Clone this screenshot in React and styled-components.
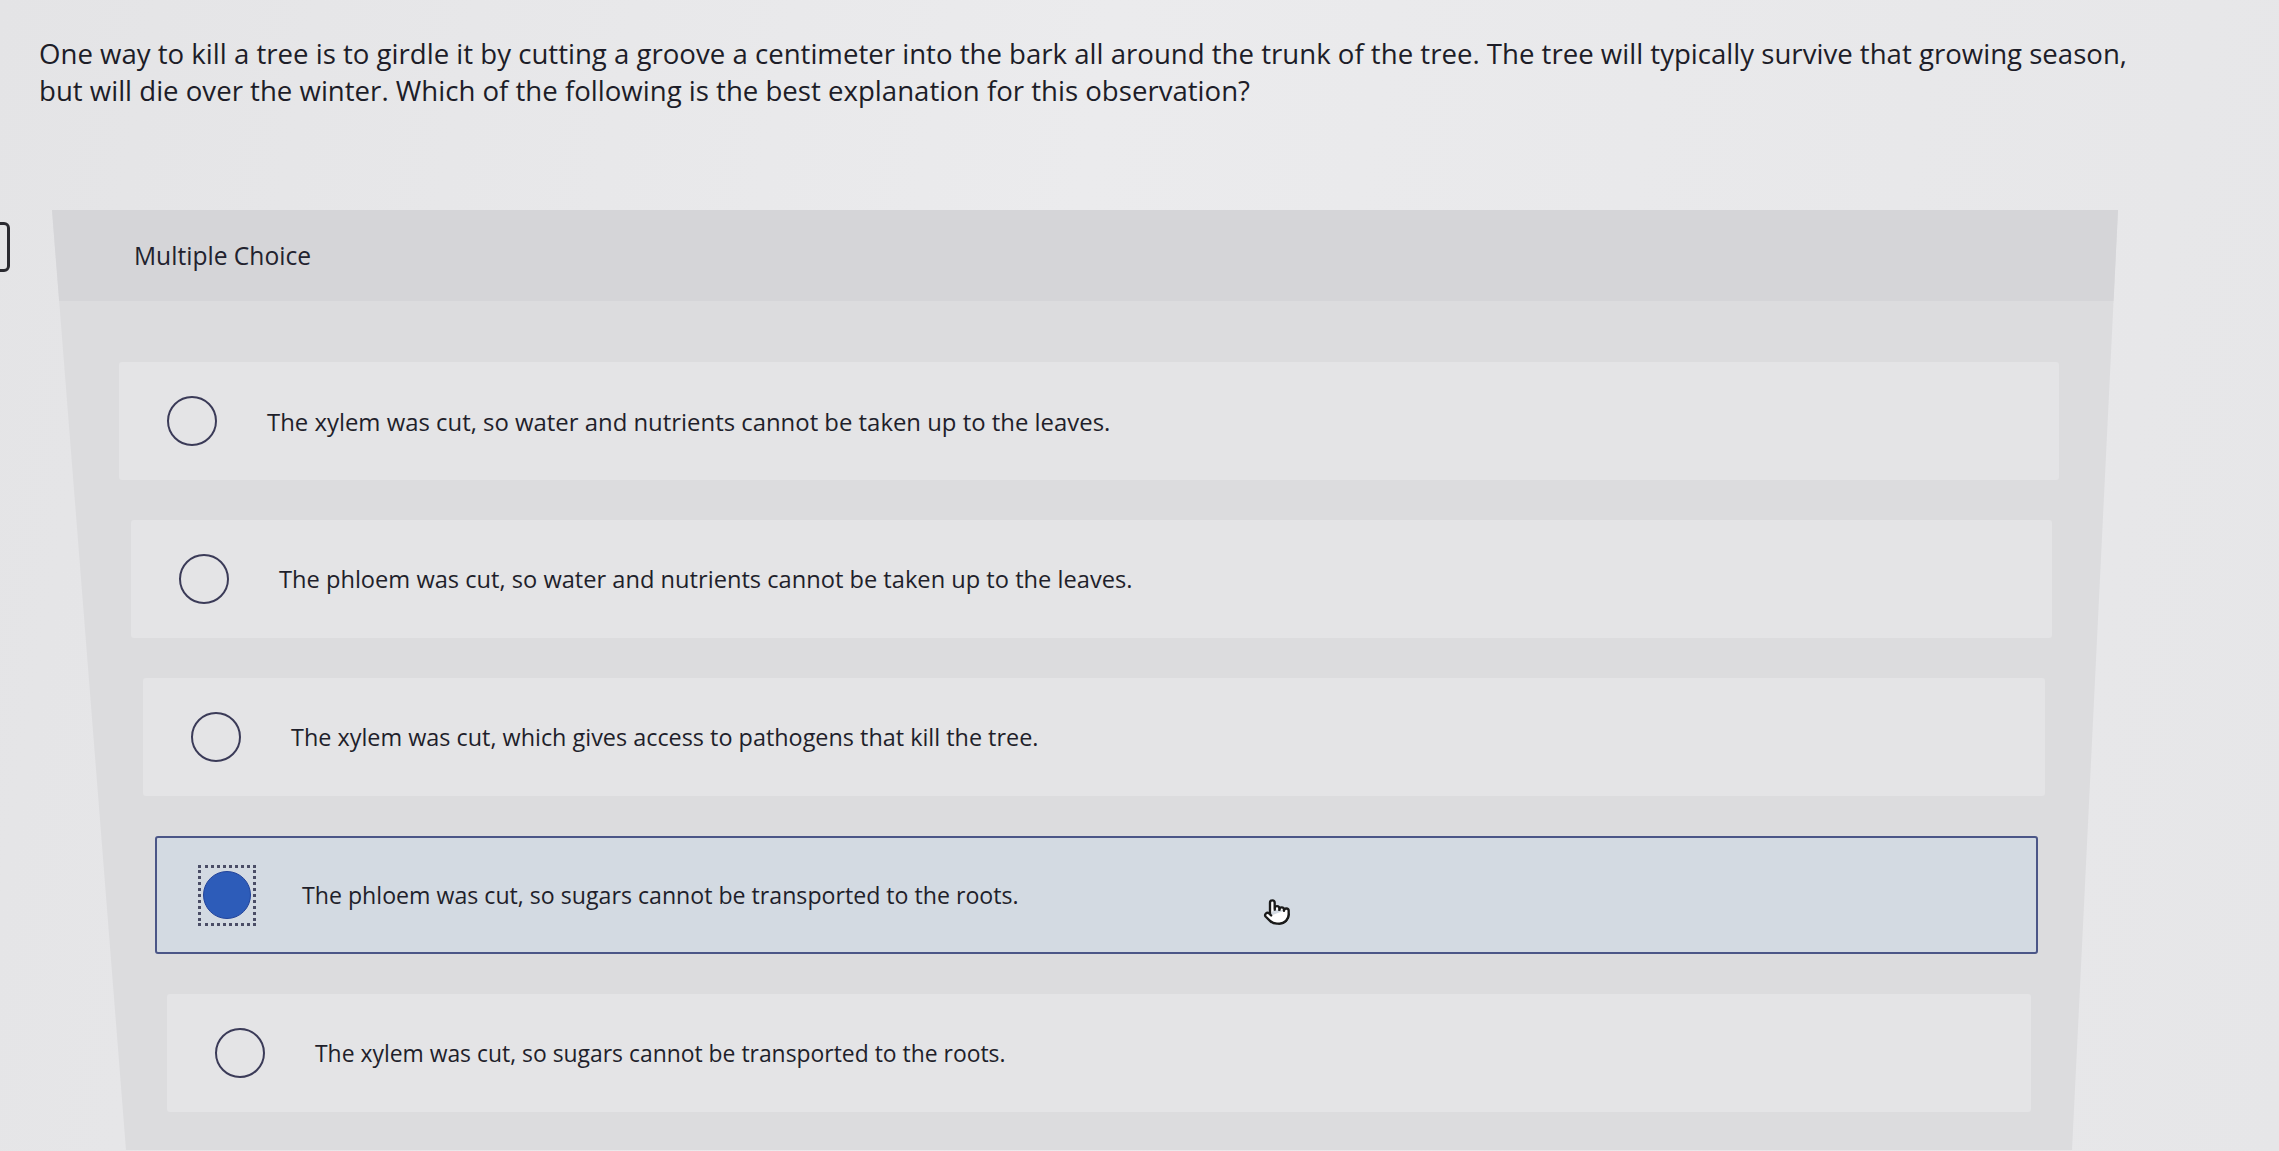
import React from "react";
import styled, { createGlobalStyle } from "styled-components";
import { Pointer } from "lucide-react";

const GlobalStyle = createGlobalStyle`
  html, body {
    margin: 0;
    padding: 0;
    background: #e7e7e9;
  }
  body {
    font-family: "Open Sans", "Lato", sans-serif;
    color: #1f1f2b;
    overflow: hidden;
  }
`;

const Page = styled.div`
  position: relative;
  width: 2279px;
  height: 1151px;
  padding: 35px 0 0 39px;
  box-sizing: border-box;
  background: linear-gradient(100deg, #e4e4e6 0%, #ebebed 45%, #e6e6e8 100%);
`;

const EdgeTab = styled.div`
  position: absolute;
  left: -14px;
  top: 222px;
  width: 18px;
  height: 44px;
  border: 3px solid #2a2a30;
  border-radius: 6px;
`;

const Question = styled.p`
  margin: 0;
  width: 2200px;
  font-size: 27.6px;
  line-height: 37px;
  color: #1d1d28;
`;

const Panel = styled.section`
  margin: 101px 161px 0 13px;
  height: 940px;
  background: #dcdcde;
  clip-path: polygon(0 0, 100% 0, calc(100% - 46px) 100%, 74px 100%);
`;

const PanelHeader = styled.div`
  height: 91px;
  display: flex;
  align-items: center;
  padding-left: 82px;
  background: #d5d5d8;
  font-size: 24.6px;
  color: #22222e;
`;

const ChoiceList = styled.div`
  display: flex;
  flex-direction: column;
  gap: 40px;
  padding-top: 61px;
`;

const ChoiceRow = styled.div`
  position: relative;
  height: 118px;
  margin-left: ${(p) => 67 + p.$index * 12}px;
  margin-right: ${(p) => 59 + p.$index * 7}px;
  display: flex;
  align-items: center;
  box-sizing: border-box;
  padding-left: ${(p) => (p.$selected ? 41 : 44)}px;
  background: ${(p) => (p.$selected ? "#d3dae2" : "#e4e4e6")};
  border: ${(p) => (p.$selected ? "2px solid #4b5687" : "none")};
  border-radius: 3px;
`;

const RadioWrap = styled.div`
  width: 58px;
  height: 61px;
  display: flex;
  align-items: center;
  justify-content: center;
  box-sizing: border-box;
  border: 3px dotted ${(p) => (p.$focused ? "#4a4d66" : "transparent")};
  flex-shrink: 0;
`;

const Radio = styled.span`
  display: block;
  width: ${(p) => (p.$checked ? 48 : 50)}px;
  height: ${(p) => (p.$checked ? 48 : 50)}px;
  border-radius: 50%;
  box-sizing: border-box;
  border: ${(p) => (p.$checked ? "1px solid #23449a" : "2.5px solid #3b3b58")};
  background: ${(p) => (p.$checked ? "#2d5cb9" : "transparent")};
`;

const ChoiceText = styled.span`
  margin-left: 46px;
  font-size: ${(p) => 23.9 - p.$index * 0.25}px;
  color: #1f1f2b;
`;

const Cursor = styled.div`
  position: absolute;
  left: 1106px;
  top: 60px;
  color: #1a1a1a;
  display: flex;
`;

const choices = [
  "The xylem was cut, so water and nutrients cannot be taken up to the leaves.",
  "The phloem was cut, so water and nutrients cannot be taken up to the leaves.",
  "The xylem was cut, which gives access to pathogens that kill the tree.",
  "The phloem was cut, so sugars cannot be transported to the roots.",
  "The xylem was cut, so sugars cannot be transported to the roots.",
];

const selected = 3;

export default function App() {
  return (
    <>
      <GlobalStyle />
      <Page>
        <EdgeTab />
        <Question>
          One way to kill a tree is to girdle it by cutting a groove a centimeter into the bark all around
          the trunk of the tree. The tree will typically survive that growing season,
          <br />
          but will die over the winter. Which of the following is the best explanation for this observation?
        </Question>
        <Panel>
          <PanelHeader>Multiple Choice</PanelHeader>
          <ChoiceList>
            {choices.map((text, i) => (
              <ChoiceRow key={i} $index={i} $selected={i === selected}>
                <RadioWrap $focused={i === selected}>
                  <Radio $checked={i === selected} />
                </RadioWrap>
                <ChoiceText $index={i}>{text}</ChoiceText>
                {i === selected && (
                  <Cursor>
                    <Pointer size={28} strokeWidth={2} fill="#ffffff" />
                  </Cursor>
                )}
              </ChoiceRow>
            ))}
          </ChoiceList>
        </Panel>
      </Page>
    </>
  );
}
